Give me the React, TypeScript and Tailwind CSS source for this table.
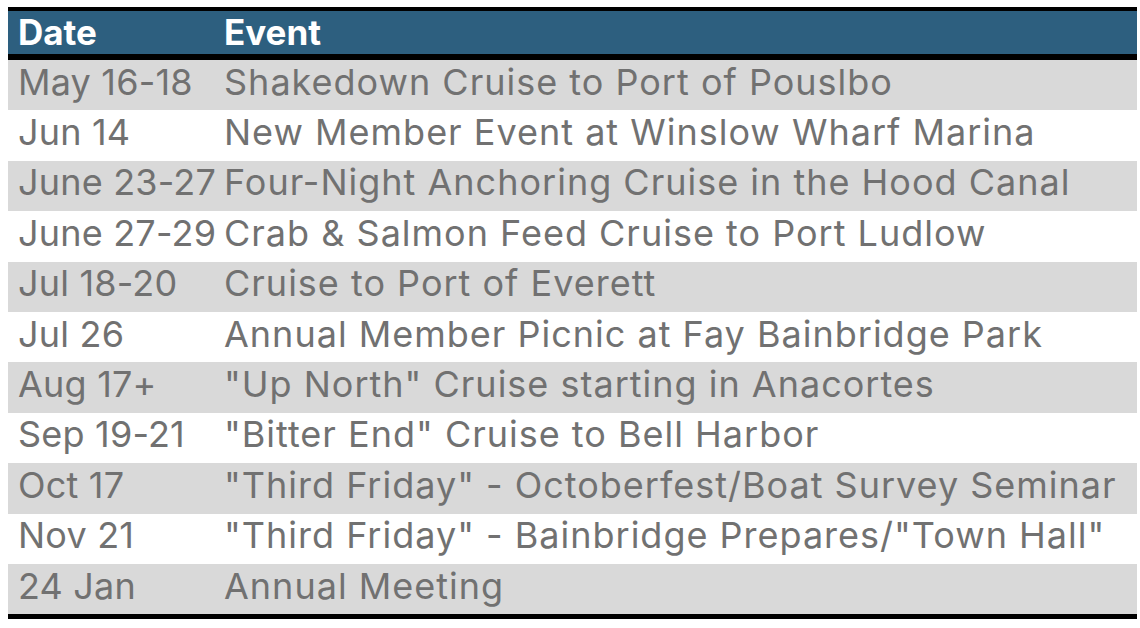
const events: [string, string][] = [
  ["May 16-18", "Shakedown Cruise to Port of Pouslbo"],
  ["Jun 14", "New Member Event at Winslow Wharf Marina"],
  ["June 23-27", "Four-Night Anchoring Cruise in the Hood Canal"],
  ["June 27-29", "Crab & Salmon Feed Cruise to Port Ludlow"],
  ["Jul 18-20", "Cruise to Port of Everett"],
  ["Jul 26", "Annual Member Picnic at Fay Bainbridge Park"],
  ["Aug 17+", "\"Up North\" Cruise starting in Anacortes"],
  ["Sep 19-21", "\"Bitter End\" Cruise to Bell Harbor"],
  ["Oct 17", "\"Third Friday\" - Octoberfest/Boat Survey Seminar"],
  ["Nov 21", "\"Third Friday\" - Bainbridge Prepares/\"Town Hall\""],
  ["24 Jan", "Annual Meeting"],
]

export default function App() {
  return (
    <div className="w-[1140px] h-[628px] bg-white pt-[7px] pl-[8px] font-['Inter','Liberation_Sans',sans-serif]">
      <div className="w-[1129px] border-t-[4px] border-b-[5px] border-black">
        <div className="flex h-[43px] items-center bg-[#2d5f7f] text-white font-bold text-[35px] leading-none border-b-[6px] border-black box-content">
          <div className="w-[206px] pl-[10px]">Date</div>
          <div className="pl-[10px]">Event</div>
        </div>
        {events.map(([date, ev], i) => (
          <div
            key={i}
            className={`flex h-[50.4px] items-center pb-[7px] text-[36px] leading-none text-[#717171] ${i % 2 === 0 ? "bg-[#d9d9d9]" : "bg-white"}`}
          >
            <div className="w-[206px] pl-[10px] whitespace-nowrap tracking-[0.2px]">{date}</div>
            <div className="pl-[10px] whitespace-nowrap tracking-[1px]">{ev}</div>
          </div>
        ))}
      </div>
    </div>
  )
}
